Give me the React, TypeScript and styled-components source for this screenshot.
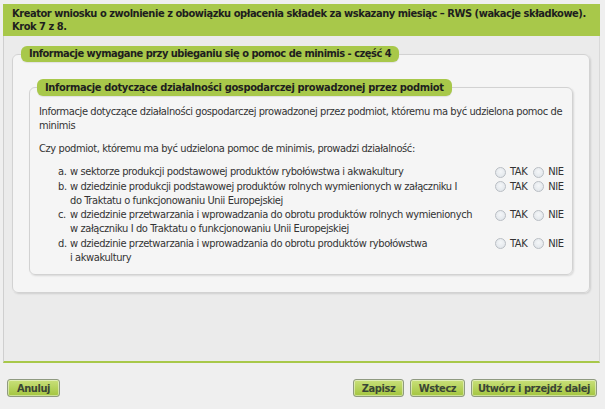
import React from "react";
import styled, { createGlobalStyle } from "styled-components";

const GlobalStyle = createGlobalStyle`
  html, body {
    margin: 0;
    padding: 0;
    background: #efefef;
  }
  body {
    font-family: "DejaVu Sans Condensed", "DejaVu Sans", Verdana, sans-serif;
    font-size: 11px;
    letter-spacing: -0.4px;
    color: #333;
  }
`;

const Page = styled.div`
  width: 597px;
  margin-left: 3px;
  padding-top: 4px;
`;

const Header = styled.div`
  background: #a8c84a;
  color: #1e1e1e;
  font-weight: bold;
  font-size: 11px;
  line-height: 13px;
  letter-spacing: -0.45px;
  padding: 3px 9px 3px;
  white-space: nowrap;
`;

const Panel = styled.div`
  background: #ebebeb;
  border-left: 1px solid #cfcfcf;
  border-right: 1px solid #d9d9d9;
  border-bottom: 2px solid #a8c84a;
  height: 315px;
  padding: 10px 9px 0 8px;
`;

const Fieldset = styled.fieldset<{ inner?: boolean }>`
  margin: ${({ inner }) => (inner ? "17px 0 0 0" : "0")};
  padding: ${({ inner }) => (inner ? "9px 7px 9px 9px" : "0 16px 17px 16px")};
  border: 1px solid #d2d2d2;
  border-radius: 6px;
  background: #f5f5f5;
  box-shadow: 1px 1px 2px rgba(0, 0, 0, 0.12);
  min-width: 0;
`;

const Legend = styled.legend<{ inner?: boolean }>`
  margin-left: ${({ inner }) => (inner ? "-2px" : "-8px")};
  padding: 0 8px;
  height: ${({ inner }) => (inner ? "17px" : "16px")};
  line-height: ${({ inner }) => (inner ? "17px" : "16px")};
  background: #a8c84a;
  border-radius: 6px;
  font-weight: bold;
  letter-spacing: ${({ inner }) => (inner ? "-0.35px" : "-0.5px")};
  color: #1e1e1e;
  white-space: nowrap;
  box-shadow: 0 1px 1px rgba(0, 0, 0, 0.08);
`;

const Para = styled.p`
  margin: 0 0 9px;
  line-height: 14px;
  white-space: nowrap;
`;

const List = styled.div`
  display: flex;
  flex-direction: column;
  gap: 0.5px;
  padding-left: 19px;
`;

const Item = styled.div`
  display: grid;
  grid-template-columns: 12px 1fr 70px;
  line-height: 14px;
`;

const Marker = styled.span``;

const ItemText = styled.span`
  white-space: nowrap;
`;

const Choices = styled.div`
  display: flex;
  align-items: center;
  height: 14px;
`;

const Radio = styled.input`
  appearance: none;
  width: 11px;
  height: 11px;
  margin: 0 4px 0 0;
  border: 1px solid #b9bec4;
  border-radius: 50%;
  background: radial-gradient(circle at 50% 40%, #f4f6f8 0%, #dde2e7 100%);
`;

const ChoiceLabel = styled.label`
  margin-right: 6px;
  &:last-child {
    margin-right: 0;
  }
`;

const Buttons = styled.div`
  display: flex;
  gap: 6px;
  padding: 16px 4px 0 4px;
  width: 590px;
`;

const Spacer = styled.div`
  flex: 1;
`;

const Button = styled.button<{ w: number }>`
  width: ${({ w }) => w}px;
  height: 18px;
  padding: 0;
  border: 1px solid #8f9a80;
  border-radius: 3px;
  background: linear-gradient(#c9e07a, #a3c53f);
  box-shadow: inset 0 0 0 1px rgba(255, 255, 255, 0.45);
  font-family: "DejaVu Sans Condensed", "DejaVu Sans", Verdana, sans-serif;
  font-size: 11px;
  font-weight: bold;
  letter-spacing: -0.4px;
  color: #3a4535;
`;

const items = [
  { m: "a.", lines: ["w sektorze produkcji podstawowej produktów rybołówstwa i akwakultury"] },
  {
    m: "b.",
    lines: [
      "w dziedzinie produkcji podstawowej produktów rolnych wymienionych w załączniku I",
      "do Traktatu o funkcjonowaniu Unii Europejskiej",
    ],
  },
  {
    m: "c.",
    lines: [
      "w dziedzinie przetwarzania i wprowadzania do obrotu produktów rolnych wymienionych",
      "w załączniku I do Traktatu o funkcjonowaniu Unii Europejskiej",
    ],
  },
  {
    m: "d.",
    lines: ["w dziedzinie przetwarzania i wprowadzania do obrotu produktów rybołówstwa", "i akwakultury"],
  },
];

const App: React.FC = () => {
  return (
    <>
      <GlobalStyle />
      <Page>
        <Header>
          Kreator wniosku o zwolnienie z obowiązku opłacenia składek za wskazany miesiąc – RWS (wakacje składkowe).
          <br />
          Krok 7 z 8.
        </Header>
        <Panel>
          <Fieldset>
            <Legend>Informacje wymagane przy ubieganiu się o pomoc de minimis - część 4</Legend>
            <Fieldset inner>
              <Legend inner>Informacje dotyczące działalności gospodarczej prowadzonej przez podmiot</Legend>
              <Para>
                Informacje dotyczące działalności gospodarczej prowadzonej przez podmiot, któremu ma być udzielona pomoc de
                <br />
                minimis
              </Para>
              <Para>Czy podmiot, któremu ma być udzielona pomoc de minimis, prowadzi działalność:</Para>
              <List>
                {items.map((it, idx) => (
                  <Item key={idx}>
                    <Marker>{it.m}</Marker>
                    <ItemText>
                      {it.lines.map((l, i) => (
                        <React.Fragment key={i}>
                          {i > 0 && <br />}
                          {l}
                        </React.Fragment>
                      ))}
                    </ItemText>
                    <Choices>
                      <Radio type="radio" name={`q${idx}`} id={`q${idx}t`} />
                      <ChoiceLabel htmlFor={`q${idx}t`}>TAK</ChoiceLabel>
                      <Radio type="radio" name={`q${idx}`} id={`q${idx}n`} />
                      <ChoiceLabel htmlFor={`q${idx}n`}>NIE</ChoiceLabel>
                    </Choices>
                  </Item>
                ))}
              </List>
            </Fieldset>
          </Fieldset>
        </Panel>
        <Buttons>
          <Button w={53}>Anuluj</Button>
          <Spacer />
          <Button w={51}>Zapisz</Button>
          <Button w={55}>Wstecz</Button>
          <Button w={126}>Utwórz i przejdź dalej</Button>
        </Buttons>
      </Page>
    </>
  );
};

export default App;
